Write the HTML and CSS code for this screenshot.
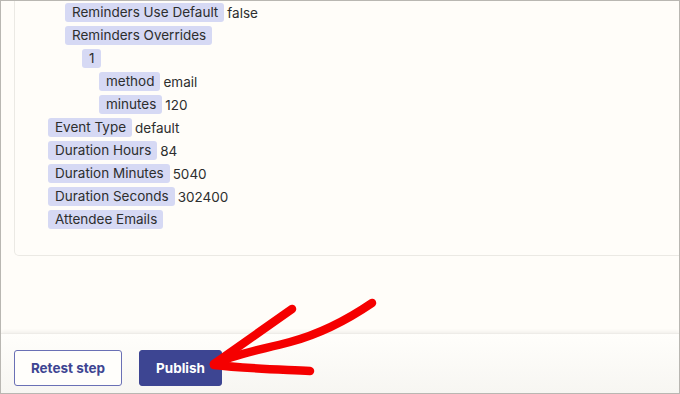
FILE: index.html
```html
<!DOCTYPE html>
<html lang="en">
<head>
    <meta charset="UTF-8">
    <title>Step output</title>
    <link rel="stylesheet" href="styles.css">
</head>
<body>
<div class="frame">
    <div class="main">
        <div class="card">
            <ul class="tree">
                <li>
                    <ul class="tree">
                        <li class="row"><span class="key">Reminders Use Default</span><span class="val">false</span></li>
                        <li class="row"><span class="key">Reminders Overrides</span></li>
                        <li>
                            <ul class="tree">
                                <li class="row"><span class="key">1</span></li>
                                <li>
                                    <ul class="tree">
                                        <li class="row"><span class="key">method</span><span class="val">email</span></li>
                                        <li class="row"><span class="key">minutes</span><span class="val">120</span></li>
                                    </ul>
                                </li>
                            </ul>
                        </li>
                    </ul>
                </li>
                <li class="row"><span class="key">Event Type</span><span class="val">default</span></li>
                <li class="row"><span class="key">Duration Hours</span><span class="val">84</span></li>
                <li class="row"><span class="key">Duration Minutes</span><span class="val">5040</span></li>
                <li class="row"><span class="key">Duration Seconds</span><span class="val">302400</span></li>
                <li class="row"><span class="key">Attendee Emails</span></li>
            </ul>
        </div>
    </div>
    <div class="footer">
        <button class="btn btn-outline">Retest step</button>
        <button class="btn btn-primary">Publish</button>
    </div>
    <svg class="arrow" width="680" height="394" viewBox="0 0 680 394">
        <g fill="none" stroke="#f50000" stroke-width="8.5" stroke-linecap="round" stroke-linejoin="round">
            <path d="M292 309 L214 364"/>
            <path d="M372 303 C350 318 320 334 290 342 C260 350 235 354 214 364"/>
            <path d="M214 365 C240 368 270 369 310 371"/>
        </g>
    </svg>
</div>
</body>
</html>
```

FILE: styles.css
```css
:root {
    --page-bg: #fffdf9;
    --chip-bg: #d6d9f4;
    --brand: #3d4592;
}
* {
    box-sizing: border-box;
}
body {
    margin: 0;
    font-family: 'Inter', sans-serif;
    color: #2d2e2e;
}
.frame {
    position: relative;
    width: 680px;
    height: 394px;
    border: 1px solid #b9b7b2;
    background: var(--page-bg);
    overflow: hidden;
    display: flex;
    flex-direction: column;
}
.main {
    flex: 1;
    padding: 0 0 0 13px;
}
.card {
    margin-right: -20px;
    border: 1px solid #ebe9e4;
    border-top: none;
    border-radius: 0 0 0 5px;
    padding: 2px 0 26px 33px;
}
.tree {
    list-style: none;
    margin: 0;
    padding: 0;
    display: flex;
    flex-direction: column;
    gap: 4px;
}
.tree .tree {
    padding-left: 17px;
}
.row {
    display: flex;
    align-items: center;
    gap: 3px;
    height: 19px;
    font-size: 13.5px;
}
.key {
    background: var(--chip-bg);
    border-radius: 3px;
    padding: 0 6px 0 7px;
    height: 19px;
    line-height: 19px;
}
.footer {
    height: 60px;
    flex-shrink: 0;
    display: flex;
    gap: 17px;
    padding: 16px 0 0 13px;
    background: linear-gradient(#fffefb, #f7f6f2);
    box-shadow: 0 -1px 4px rgba(0, 0, 0, 0.07);
    border-top: 1px solid #eeece8;
}
.btn {
    height: 36px;
    border-radius: 3px;
    font-family: 'Inter', sans-serif;
    font-weight: 700;
    font-size: 13.5px;
    cursor: pointer;
}
.btn-outline {
    width: 108px;
    background: #fffefb;
    color: var(--brand);
    border: 1px solid #6a70b5;
}
.btn-primary {
    width: 83px;
    background: var(--brand);
    color: #fff;
    border: 1px solid var(--brand);
}
.arrow {
    position: absolute;
    left: -1px;
    top: -1px;
    pointer-events: none;
}
```
